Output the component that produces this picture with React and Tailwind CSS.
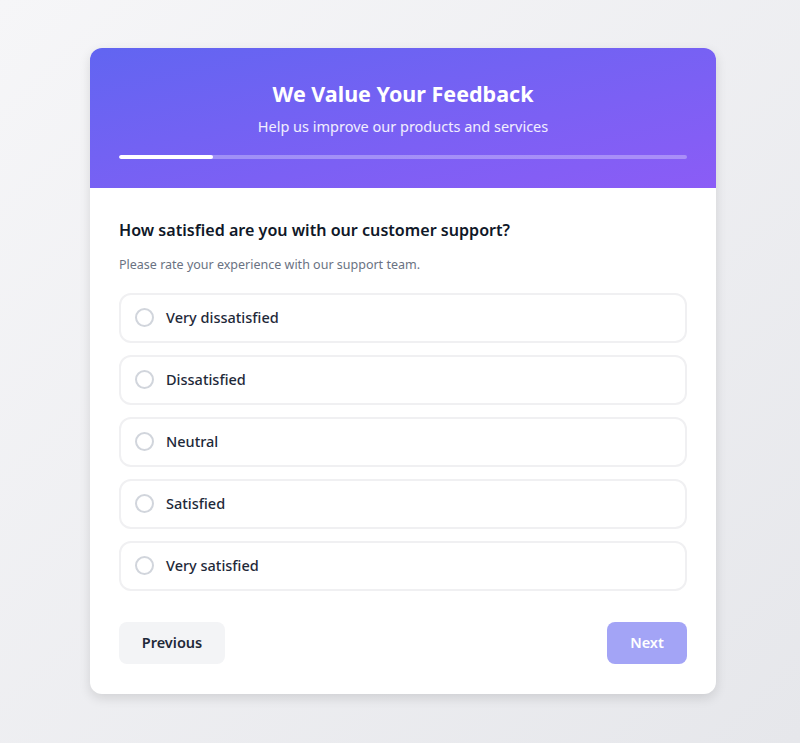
import React, { useState } from 'react';

const options = ['Very dissatisfied', 'Dissatisfied', 'Neutral', 'Satisfied', 'Very satisfied'];

const App = () => {
    const [selected, setSelected] = useState(null);
    const progress = 16.6;

    return (
        <div
            className="min-h-screen w-full flex items-center justify-center pl-[6px] pb-[2px] bg-linear-to-br from-[#f6f6f8] to-[#e6e7eb]"
            style={{ fontFamily: '"Noto Sans", "Open Sans", sans-serif' }}
        >
            <div className="w-[626px] bg-white rounded-xl overflow-hidden shadow-[0_4px_12px_rgba(0,0,0,0.12)]">
                {/* Header */}
                <div className="bg-linear-to-br from-[#6165f1] to-[#8b5cf6] px-[29px] pt-[30px] pb-[29px] text-center">
                    <h1 className="text-[21.5px] leading-8 font-bold text-white">We Value Your Feedback</h1>
                    <p className="mt-1 text-[14.5px] leading-6 text-white/90">Help us improve our products and services</p>
                    <div className="mt-[17px] h-1 w-full rounded-full bg-white/30 overflow-hidden">
                        <div className="h-full rounded-full bg-white" style={{ width: `${progress}%` }}></div>
                    </div>
                </div>

                {/* Body */}
                <div className="px-[29px] pt-7 pb-[30px]">
                    <h2 className="text-[16.1px] leading-7 font-semibold text-gray-900">How satisfied are you with our customer support?</h2>
                    <p className="mt-[11px] text-[12.5px] leading-5 text-gray-500">Please rate your experience with our support team.</p>

                    <div className="mt-[18px] flex flex-col gap-3">
                        {options.map((opt, idx) => (
                            <button
                                key={idx}
                                onClick={() => setSelected(idx)}
                                className={`h-[50px] w-full flex items-center gap-3 px-[14px] rounded-xl border-2 text-left ${selected === idx ? 'border-indigo-500 bg-indigo-50' : 'border-[#f0f0f2] bg-white'}`}
                            >
                                <span className={`w-[19px] h-[19px] rounded-full border-2 ${selected === idx ? 'border-indigo-500' : 'border-gray-300'}`}></span>
                                <span className="text-[14.5px] font-medium text-gray-800">{opt}</span>
                            </button>
                        ))}
                    </div>

                    <div className="mt-[31px] flex items-center justify-between">
                        <button className="h-[42px] w-[106px] rounded-lg bg-gray-100 text-[14.5px] font-semibold text-gray-800">Previous</button>
                        <button className="h-[42px] w-[80px] rounded-lg bg-[#a3a4f6] text-[14.5px] font-semibold text-white">Next</button>
                    </div>
                </div>
            </div>
        </div>
    );
};

export default App;
